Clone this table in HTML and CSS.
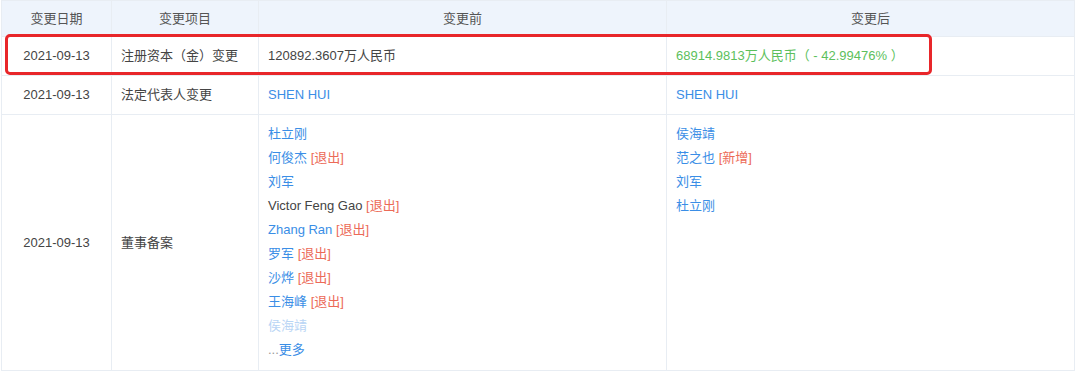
FILE: index.html
```html
<!DOCTYPE html>
<html lang="zh">
<head>
<meta charset="utf-8">
<link rel="stylesheet" href="styles.css">
</head>
<body>
<div class="wrap">
  <table class="tbl">
    <colgroup>
      <col class="c1"><col class="c2"><col class="c3"><col class="c4">
    </colgroup>
    <thead>
      <tr>
        <th>变更日期</th>
        <th>变更项目</th>
        <th>变更前</th>
        <th>变更后</th>
      </tr>
    </thead>
    <tbody>
      <tr class="r1">
        <td class="date">2021-09-13</td>
        <td>注册资本（金）变更</td>
        <td>120892.3607万人民币</td>
        <td class="green">68914.9813万人民币（ - 42.99476% ）</td>
      </tr>
      <tr class="r2">
        <td class="date">2021-09-13</td>
        <td>法定代表人变更</td>
        <td><span class="blue">SHEN HUI</span></td>
        <td><span class="blue">SHEN HUI</span></td>
      </tr>
      <tr class="r3">
        <td class="date">2021-09-13</td>
        <td>董事备案</td>
        <td class="list">
          <div class="line"><span class="blue">杜立刚</span></div>
          <div class="line"><span class="blue">何俊杰</span> <span class="red">[退出]</span></div>
          <div class="line"><span class="blue">刘军</span></div>
          <div class="line">Victor Feng Gao <span class="red">[退出]</span></div>
          <div class="line"><span class="blue">Zhang Ran</span> <span class="red">[退出]</span></div>
          <div class="line"><span class="blue">罗军</span> <span class="red">[退出]</span></div>
          <div class="line"><span class="blue">沙烨</span> <span class="red">[退出]</span></div>
          <div class="line"><span class="blue">王海峰</span> <span class="red">[退出]</span></div>
          <div class="line"><span class="faded">侯海靖</span></div>
          <div class="line"><span class="dots">...</span><span class="blue">更多</span></div>
        </td>
        <td class="list">
          <div class="line"><span class="blue">侯海靖</span></div>
          <div class="line"><span class="blue">范之也</span> <span class="red">[新增]</span></div>
          <div class="line"><span class="blue">刘军</span></div>
          <div class="line"><span class="blue">杜立刚</span></div>
        </td>
      </tr>
    </tbody>
  </table>
  <div class="highlight"></div>
</div>
</body>
</html>
```

FILE: styles.css
```css
html, body {
  margin: 0;
  padding: 0;
  background: #ffffff;
}
body {
  font-family: "Liberation Sans", "Noto Sans CJK SC", sans-serif;
  font-size: 13px;
  color: #444444;
}
.wrap {
  position: relative;
  padding-left: 1px;
  width: 1074px;
}
.tbl {
  border-collapse: collapse;
  table-layout: fixed;
  width: 1074px;
}
.c1 { width: 110px; }
.c2 { width: 147px; }
.c3 { width: 408px; }
.c4 { width: 408px; }
.tbl th, .tbl td {
  border: 1px solid #e8edf3;
  padding: 0 9px;
  text-align: left;
  vertical-align: middle;
  line-height: 18px;
  white-space: nowrap;
}
.tbl th {
  background: #eef4fc;
  font-weight: normal;
  color: #555555;
  text-align: center;
  height: 35px;
  padding: 0;
}
.r1 td { height: 38px; }
.r2 td { height: 38px; }
.tbl td.date {
  text-align: center;
  padding: 0;
}
.tbl td.list {
  vertical-align: top;
  padding-top: 7px;
  padding-bottom: 8px;
}
.r3 td { height: 240px; }
.line {
  line-height: 24px;
  height: 24px;
}
.blue { color: #3a8ee6; }
.red { color: #ec6a57; }
.green { color: #5cbf5c; }
.faded { color: #b9d5f5; }
.dots { color: #999999; }
.highlight {
  position: absolute;
  left: 5px;
  top: 34px;
  width: 921px;
  height: 35px;
  border: 3px solid #e8262a;
  border-radius: 5px;
}
```
